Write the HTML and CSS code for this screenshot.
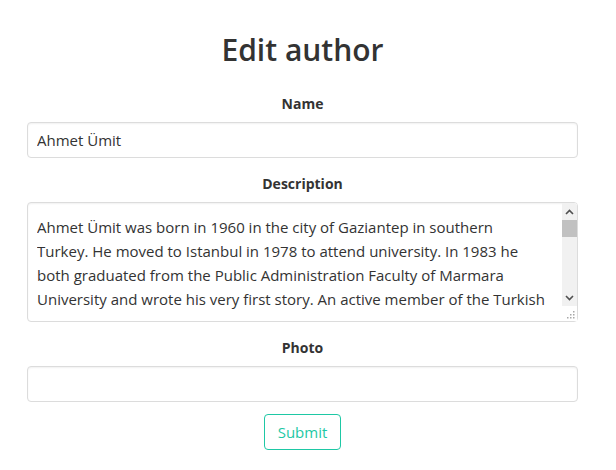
FILE: index.html
```html
<!DOCTYPE html>
<html>
<head>
<meta charset="utf-8">
<link rel="stylesheet" href="styles.css">
</head>
<body>
<div class="page">
  <h1 class="title">Edit author</h1>
  <form class="form">
    <div class="group">
      <label class="label">Name</label>
      <input class="control" type="text" value="Ahmet Ümit">
    </div>
    <div class="group">
      <label class="label">Description</label>
      <div class="area-wrap">
        <textarea class="area">Ahmet Ümit was born in 1960 in the city of Gaziantep in southern Turkey. He moved to Istanbul in 1978 to attend university. In 1983 he both graduated from the Public Administration Faculty of Marmara University and wrote his very first story. An active member of the Turkish Communist Party, he studied political science in Moscow and later wrote poems, stories and detective novels that made him one of the most popular authors of Turkey.</textarea>
        <div class="scrollbar">
          <div class="sb-btn">
            <svg width="9" height="6" viewBox="0 0 9 6"><path d="M1 5 L4.5 1.5 L8 5" fill="none" stroke="#505050" stroke-width="1.6"/></svg>
          </div>
          <div class="sb-track"><div class="sb-thumb"></div></div>
          <div class="sb-btn">
            <svg width="9" height="6" viewBox="0 0 9 6"><path d="M1 1 L4.5 4.5 L8 1" fill="none" stroke="#505050" stroke-width="1.6"/></svg>
          </div>
          <div class="sb-corner">
            <svg width="15" height="15" viewBox="0 0 15 15">
              <rect x="11" y="5" width="1.5" height="1.5" fill="#a8a8a8"/>
              <rect x="8" y="8" width="1.5" height="1.5" fill="#a8a8a8"/>
              <rect x="11" y="8" width="1.5" height="1.5" fill="#a8a8a8"/>
              <rect x="5" y="11" width="1.5" height="1.5" fill="#a8a8a8"/>
              <rect x="8" y="11" width="1.5" height="1.5" fill="#a8a8a8"/>
              <rect x="11" y="11" width="1.5" height="1.5" fill="#a8a8a8"/>
            </svg>
          </div>
        </div>
      </div>
    </div>
    <div class="group">
      <label class="label">Photo</label>
      <input class="control" type="text" value="">
    </div>
    <div class="actions">
      <button class="btn" type="button">Submit</button>
    </div>
  </form>
</div>
</body>
</html>
```
FILE: styles.css
```css
html, body {
  margin: 0;
  padding: 0;
  background: #fff;
}
body {
  font-family: "Open Sans", "Noto Sans", sans-serif;
  color: #333;
}
.page {
  padding: 0 38px 0 27px;
}
.title {
  margin: 0;
  padding-top: 30px;
  text-align: center;
  font-size: 30px;
  font-weight: 600;
  line-height: 40px;
  color: #333;
}
.form {
  display: flex;
  flex-direction: column;
  margin-top: 18px;
}
.group {
  display: flex;
  flex-direction: column;
  align-items: stretch;
}
.group + .group {
  margin-top: 10px;
}
.label {
  text-align: center;
  font-weight: 700;
  font-size: 14px;
  line-height: 20px;
  margin: 6px 0 8px;
}
.control {
  display: block;
  box-sizing: border-box;
  height: 36px;
  width: 100%;
  border: 1px solid #dcdcdc;
  border-radius: 4px;
  box-shadow: inset 0 1px 2px rgba(0,0,0,.06);
  font-family: inherit;
  font-size: 15px;
  color: #333;
  padding: 6px 9px;
  margin: 0;
  outline: none;
}
.area-wrap {
  position: relative;
  box-sizing: border-box;
  height: 120px;
  border: 1px solid #dcdcdc;
  border-radius: 4px;
  box-shadow: inset 0 1px 2px rgba(0,0,0,.06);
  padding: 12px 31px 10px 9px;
}
.area {
  display: block;
  box-sizing: border-box;
  width: 100%;
  height: 96px;
  border: none;
  padding: 0;
  margin: 0;
  background: transparent;
  font-family: inherit;
  font-size: 15px;
  line-height: 24px;
  color: #333;
  resize: none;
  overflow: hidden;
  outline: none;
}
.scrollbar {
  position: absolute;
  top: 0;
  right: 0;
  width: 15px;
  bottom: 0;
  display: flex;
  flex-direction: column;
  background: #fff;
  border-radius: 0 3px 3px 0;
}
.sb-btn {
  height: 17px;
  display: flex;
  align-items: center;
  justify-content: center;
  background: #f1f1f1;
}
.sb-btn:first-child {
  border-top-right-radius: 3px;
}
.sb-track {
  flex: 1;
  background: #f1f1f1;
}
.sb-thumb {
  height: 17px;
  background: #c1c1c1;
}
.sb-corner {
  height: 15px;
  background: #fff;
}
.sb-corner svg {
  display: block;
}
.actions {
  display: flex;
  justify-content: center;
  margin-top: 12px;
}
.btn {
  font-family: inherit;
  font-size: 15px;
  color: #1ec8a5;
  background: #fff;
  border: 1px solid #1ec8a5;
  border-radius: 4px;
  height: 36px;
  width: 77px;
  padding: 0;
}
```
